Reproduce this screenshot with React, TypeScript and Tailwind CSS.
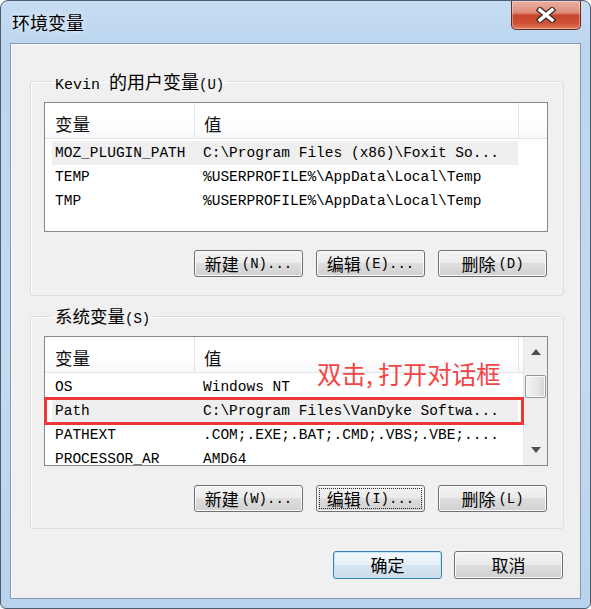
import React from 'react';

const mono = "font-['Liberation_Mono',monospace]";
const cjk = "font-['Noto_Sans_CJK_SC','Noto_Sans',sans-serif]";

type Row = { name: string; value: string; selected?: boolean };

const userVars: Row[] = [
  { name: 'MOZ_PLUGIN_PATH', value: 'C:\\Program Files (x86)\\Foxit So...', selected: true },
  { name: 'TEMP', value: '%USERPROFILE%\\AppData\\Local\\Temp' },
  { name: 'TMP', value: '%USERPROFILE%\\AppData\\Local\\Temp' },
];

const systemVars: Row[] = [
  { name: 'OS', value: 'Windows NT' },
  { name: 'Path', value: 'C:\\Program Files\\VanDyke Softwa...', selected: true },
  { name: 'PATHEXT', value: '.COM;.EXE;.BAT;.CMD;.VBS;.VBE;....' },
  { name: 'PROCESSOR_AR', value: 'AMD64' },
];

function WinButton({
  label,
  mnemonic,
  focused,
  isDefault,
  tall,
}: {
  label: string;
  mnemonic?: string;
  focused?: boolean;
  isDefault?: boolean;
  tall?: boolean;
}) {
  return (
    <div
      className={`w-[109px] ${tall ? 'h-[28px]' : 'h-[27px]'} rounded-[3px] border p-[2px] flex ${
        isDefault
          ? 'border-[#3c7fb1] shadow-[inset_0_0_0_1px_#bfe6fb] bg-[linear-gradient(180deg,#f2f8fc_0%,#e8f1f8_50%,#d8e6f1_50%,#cfdde9_100%)]'
          : 'border-[#707070] shadow-[inset_0_0_0_1px_#fbfbfb] bg-[linear-gradient(180deg,#f3f3f3_0%,#ebebeb_50%,#dedede_50%,#d0d0d0_100%)]'
      }`}
    >
      <div
        className={`flex-1 flex items-center justify-center text-black ${
          focused ? 'border border-dotted border-[#2b2b2b]' : ''
        }`}
      >
        <span className={`${cjk} text-[17px] leading-[20px]`}>{label}</span>
        {mnemonic && <span className={`${mono} text-[14px] leading-[20px] ml-[3px]`}>{mnemonic}</span>}
      </div>
    </div>
  );
}

function Arrow({ up }: { up?: boolean }) {
  return (
    <svg width="10" height="6" viewBox="0 0 10 6">
      <polygon points={up ? '5,0 10,6 0,6' : '0,0 10,0 5,6'} fill="#505050" />
    </svg>
  );
}

function ScrollBar() {
  return (
    <div className="w-[24px] flex flex-col bg-[#efefef] border-l border-[#e6e6e6]">
      <div className="h-[30px] flex items-center justify-center">
        <Arrow up />
      </div>
      <div className="flex-1 pt-[8px] px-[1px]">
        <div className="h-[23px] rounded-[2px] border border-[#979797] bg-[linear-gradient(90deg,#f4f4f4_0%,#e6e6e6_60%,#d4d4d4_100%)] shadow-[inset_0_0_0_1px_#fafafa]" />
      </div>
      <div className="h-[30px] flex items-center justify-center">
        <Arrow />
      </div>
    </div>
  );
}

function ListView({
  rows,
  scroll,
  headerPad,
  children,
}: {
  rows: Row[];
  scroll?: boolean;
  headerPad: string;
  children?: React.ReactNode;
}) {
  return (
    <div className="relative">
      <div className="h-[130px] border border-[#828790] bg-white flex overflow-hidden">
        <div className="flex-1 min-w-0 flex flex-col">
          <div className="h-[36px] shrink-0 flex border-b border-[#e2e4e8] bg-[linear-gradient(180deg,#ffffff_0%,#ffffff_60%,#f7f8fa_100%)]">
            <div className={`w-[150px] border-r border-[#e3e6ea] pl-[10px] flex items-center ${headerPad}`}>
              <span className={`${cjk} text-[17.5px] leading-[20px] text-[#111]`}>变量</span>
            </div>
            <div className={`w-[324px] border-r border-[#e3e6ea] pl-[9px] flex items-center ${headerPad}`}>
              <span className={`${cjk} text-[17.5px] leading-[20px] text-[#111]`}>值</span>
            </div>
            <div className="flex-1" />
          </div>
          <div className="pt-[2px] flex flex-col">
            {rows.map((r) => (
              <div key={r.name} className="h-[24px] shrink-0 flex">
                <div
                  className={`ml-[7px] w-[466px] flex items-center whitespace-nowrap text-black ${mono} text-[14.5px] leading-[24px] ${
                    r.selected ? 'bg-[#efefef]' : ''
                  }`}
                >
                  <span className="pl-[3px] w-[151px]">{r.name}</span>
                  <span>{r.value}</span>
                </div>
              </div>
            ))}
          </div>
        </div>
        {scroll && <ScrollBar />}
      </div>
      {children}
    </div>
  );
}

export default function App() {
  return (
    <div className="w-[591px] h-[609px] bg-white">
      <div className="w-[591px] h-[609px] flex flex-col rounded-t-[8px] rounded-b-[6px] border border-[#4e5d6e] bg-[linear-gradient(180deg,#c6ddf3_0%,#bcd6f0_7%,#c3daf1_60%,#b9d3ed_100%)] overflow-hidden">
        {/* title bar */}
        <div className="h-[42px] shrink-0 flex items-start">
          <div
            className={`pl-[11px] pt-[11px] ${cjk} text-[18px] leading-[20px] text-black [text-shadow:0_0_6px_rgba(255,255,255,0.95)]`}
          >
            环境变量
          </div>
          <div className="ml-auto mr-[9px] w-[70px] h-[29px] rounded-b-[5px] border border-t-0 border-[#6b2a20] bg-[linear-gradient(180deg,#eab0a2_0%,#df8f7c_40%,#c9452d_52%,#cf5236_80%,#e0805e_100%)] shadow-[inset_0_0_0_1px_rgba(255,255,255,0.35)] flex items-center justify-center">
            <svg width="22" height="16" viewBox="0 0 22 16">
              <path d="M5 3 L17 13 M17 3 L5 13" stroke="#3c2a28" strokeWidth="6" strokeLinecap="square" />
              <path d="M5 3 L17 13 M17 3 L5 13" stroke="#ffffff" strokeWidth="3.5" strokeLinecap="square" />
            </svg>
          </div>
        </div>

        {/* client area */}
        <div className="mx-[9px] mb-[9px] flex-1 border border-[#8598ae] bg-[#f0f0f0] shadow-[inset_1px_1px_0_#fafafa] flex flex-col pt-[27px] pl-[19px] pr-[16px]">
          <fieldset className="border border-[#d5dfe5] rounded-[3px] pl-[13px] pr-[15px] pb-[18px] shadow-[inset_1px_1px_0_#ffffff]">
            <legend className="ml-[8px] px-[3px] h-[20px] leading-[20px] whitespace-nowrap text-black">
              <span className={`${mono} text-[15px]`}>Kevin </span>
              <span className={`${cjk} text-[18px]`}>的用户变量</span>
              <span className={`${mono} text-[14px]`}>(U)</span>
            </legend>
            <div className="mt-[11px]">
              <ListView rows={userVars} headerPad="pt-[6px]" />
            </div>
            <div className="mt-[18px] mr-[1px] flex justify-end gap-[13px]">
              <WinButton label="新建" mnemonic="(N)..." />
              <WinButton label="编辑" mnemonic="(E)..." />
              <WinButton label="删除" mnemonic="(D)" />
            </div>
          </fieldset>

          <fieldset className="mt-[10px] border border-[#d5dfe5] rounded-[3px] pl-[13px] pr-[15px] pb-[16px] shadow-[inset_1px_1px_0_#ffffff]">
            <legend className="ml-[8px] px-[3px] h-[20px] leading-[20px] whitespace-nowrap text-black">
              <span className={`${cjk} text-[17.5px]`}>系统变量</span>
              <span className={`${mono} text-[14px]`}>(S)</span>
            </legend>
            <div className="mt-[10px]">
              <ListView rows={systemVars} scroll headerPad="pt-[7px]">
                <div className="absolute left-0 top-[61px] w-[480px] h-[28px] border-[3px] border-[#ee3737]" />
                <div className={`absolute left-[273px] top-[24px] ${cjk} text-[24.5px] leading-[28px] whitespace-nowrap text-[#f24646]`}>
                  双击, 打开对话框
                </div>
              </ListView>
            </div>
            <div className="mt-[19px] mr-[1px] flex justify-end gap-[13px]">
              <WinButton label="新建" mnemonic="(W)..." />
              <WinButton label="编辑" mnemonic="(I)..." focused />
              <WinButton label="删除" mnemonic="(L)" />
            </div>
          </fieldset>

          <div className="mt-[22px] mr-[1px] flex justify-end gap-[12px]">
            <WinButton label="确定" isDefault tall />
            <WinButton label="取消" tall />
          </div>
        </div>
      </div>
    </div>
  );
}
